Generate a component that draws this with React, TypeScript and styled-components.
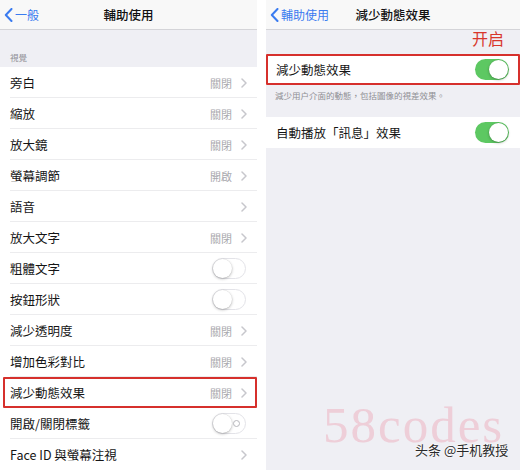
import styled, { createGlobalStyle } from "styled-components";

const GlobalStyle = createGlobalStyle`
  html, body {
    margin: 0;
    padding: 0;
    background: #ffffff;
  }
  body {
    font-family: "Noto Sans CJK TC", "Noto Sans", sans-serif;
    color: #111;
  }
`;

const Page = styled.div`
  position: relative;
  width: 523px;
  height: 470px;
  display: flex;
  gap: 9px;
  overflow: hidden;
`;

const Panel = styled.div<{ $width: number }>`
  width: ${(p) => p.$width}px;
  height: 470px;
  display: flex;
  flex-direction: column;
  background: #efeff4;
  overflow: hidden;
`;

const NavBar = styled.div`
  height: 29px;
  flex-shrink: 0;
  display: grid;
  grid-template-columns: 1fr auto 1fr;
  align-items: center;
  background: #f8f8f8;
  border-bottom: 1px solid #d4d4d8;
  padding: 0 4px;
`;

const BackLink = styled.div`
  display: flex;
  align-items: center;
  gap: 2px;
  color: #3a7bf0;
  font-size: 12px;
`;

const NavTitle = styled.div`
  font-size: 12.5px;
  font-weight: 500;
  color: #111;
`;

const SectionHeader = styled.div<{ $height: number }>`
  height: ${(p) => p.$height}px;
  flex-shrink: 0;
  display: flex;
  align-items: flex-end;
  padding: 0 10px 4px;
  box-sizing: border-box;
  font-size: 8.5px;
  color: #8e8e93;
`;

const Annotation = styled.div`
  height: 24px;
  flex-shrink: 0;
  display: flex;
  align-items: flex-start;
  justify-content: flex-end;
  padding-right: 16px;
  box-sizing: border-box;
  font-family: "Noto Sans CJK SC", sans-serif;
  font-size: 16px;
  line-height: 17px;
  color: #d8362c;
`;

const List = styled.div`
  display: flex;
  flex-direction: column;
  background: #ffffff;
`;

const Row = styled.div<{ $highlight?: boolean; $inset?: number; $last?: boolean }>`
  position: relative;
  height: 31px;
  flex-shrink: 0;
  display: flex;
  align-items: center;
  padding: 0 10px;
  box-sizing: border-box;
  background: #ffffff;

  &::after {
    content: "";
    display: ${(p) => (p.$last ? "none" : "block")};
    position: absolute;
    left: 10px;
    right: 0;
    bottom: 0;
    height: 1px;
    background: #ececee;
  }

  &::before {
    content: "";
    display: ${(p) => (p.$highlight ? "block" : "none")};
    position: absolute;
    top: 0;
    bottom: 0;
    left: ${(p) => p.$inset ?? 0}px;
    right: 0;
    border: 2px solid #d6302c;
    border-radius: 1px;
    z-index: 2;
  }
`;

const Label = styled.div`
  flex: 1;
  font-size: 12.5px;
  color: #151515;
  white-space: nowrap;
`;

const Value = styled.div`
  font-size: 11px;
  color: #a9a9ae;
  margin-right: 9px;
`;

const Footer = styled.div`
  height: 32px;
  flex-shrink: 0;
  padding: 4px 9px 0;
  box-sizing: border-box;
  font-size: 8.5px;
  color: #8e8e93;
`;

const Track = styled.div<{ $on?: boolean }>`
  position: relative;
  width: 34px;
  height: 21px;
  margin-right: 1px;
  border-radius: 11px;
  box-sizing: border-box;
  background: ${(p) => (p.$on ? "#5dc862" : "#ffffff")};
  border: ${(p) => (p.$on ? "none" : "1.5px solid #e3e3e8")};
  display: flex;
  align-items: center;
  justify-content: ${(p) => (p.$on ? "flex-end" : "flex-start")};
  padding: ${(p) => (p.$on ? "0 1.5px" : "0")};
`;

const Knob = styled.div`
  width: 19px;
  height: 19px;
  border-radius: 50%;
  background: #ffffff;
  box-shadow: 0 1px 3px rgba(0, 0, 0, 0.28), 0 0 0 0.5px rgba(0, 0, 0, 0.06);
`;

const OffMark = styled.div`
  position: absolute;
  right: 5px;
  top: 50%;
  width: 5px;
  height: 5px;
  margin-top: -3.5px;
  border-radius: 50%;
  border: 1.2px solid #b6b6bb;
`;

const Filler = styled.div`
  flex: 1;
`;

const Watermark = styled.div`
  position: absolute;
  left: 323px;
  top: 400px;
  font-family: "Liberation Serif", serif;
  font-size: 51px;
  letter-spacing: 2px;
  color: rgba(236, 160, 176, 0.42);
  line-height: 1;
  pointer-events: none;
`;

const Credit = styled.div`
  position: absolute;
  left: 415px;
  top: 440px;
  font-family: "Noto Sans CJK SC", sans-serif;
  font-size: 13px;
  color: #2a2a2a;
  text-shadow: 0 0 2px #fff, 0 0 2px #fff;
  pointer-events: none;
`;

function BackChevron() {
  return (
    <svg width="9" height="14" viewBox="0 0 9 14">
      <path d="M7.5 1 L1.8 7 L7.5 13" fill="none" stroke="#3a7bf0" strokeWidth="2" strokeLinecap="round" strokeLinejoin="round" />
    </svg>
  );
}

function Chevron() {
  return (
    <svg width="6" height="10" viewBox="0 0 6 10">
      <path d="M1 1 L5 5 L1 9" fill="none" stroke="#c7c7cc" strokeWidth="1.5" strokeLinecap="round" strokeLinejoin="round" />
    </svg>
  );
}

function Toggle({ on, mark }: { on?: boolean; mark?: boolean }) {
  return (
    <Track $on={on}>
      {mark && !on && <OffMark />}
      <Knob />
    </Track>
  );
}

type Item = {
  label: string;
  value?: string;
  toggle?: "off" | "mark";
  highlight?: boolean;
};

const items: Item[] = [
  { label: "旁白", value: "關閉" },
  { label: "縮放", value: "關閉" },
  { label: "放大鏡", value: "關閉" },
  { label: "螢幕調節", value: "開啟" },
  { label: "語音" },
  { label: "放大文字", value: "關閉" },
  { label: "粗體文字", toggle: "off" },
  { label: "按鈕形狀", toggle: "off" },
  { label: "減少透明度", value: "關閉" },
  { label: "增加色彩對比", value: "關閉" },
  { label: "減少動態效果", value: "關閉", highlight: true },
  { label: "開啟/關閉標籤", toggle: "mark" },
  { label: "Face ID 與螢幕注視" },
];

export default function App() {
  return (
    <>
      <GlobalStyle />
      <Page>
        <Panel $width={257}>
          <NavBar>
            <BackLink>
              <BackChevron />
              一般
            </BackLink>
            <NavTitle>輔助使用</NavTitle>
            <div />
          </NavBar>
          <SectionHeader $height={37}>視覺</SectionHeader>
          <List>
            {items.map((item, i) => (
              <Row key={item.label} $highlight={item.highlight} $inset={3} $last={i === items.length - 1}>
                <Label>{item.label}</Label>
                {item.toggle ? (
                  <Toggle mark={item.toggle === "mark"} />
                ) : (
                  <>
                    {item.value && <Value>{item.value}</Value>}
                    <Chevron />
                  </>
                )}
              </Row>
            ))}
          </List>
        </Panel>
        <Panel $width={254}>
          <NavBar>
            <BackLink>
              <BackChevron />
              輔助使用
            </BackLink>
            <NavTitle>減少動態效果</NavTitle>
            <div />
          </NavBar>
          <Annotation>开启</Annotation>
          <List>
            <Row $highlight $last>
              <Label>減少動態效果</Label>
              <Toggle on />
            </Row>
          </List>
          <Footer>減少用户介面的動態，包括圖像的視差效果。</Footer>
          <List>
            <Row $last>
              <Label>自動播放「訊息」效果</Label>
              <Toggle on />
            </Row>
          </List>
          <Filler />
        </Panel>
        <Watermark>58codes</Watermark>
        <Credit>头条 @手机教授</Credit>
      </Page>
    </>
  );
}
